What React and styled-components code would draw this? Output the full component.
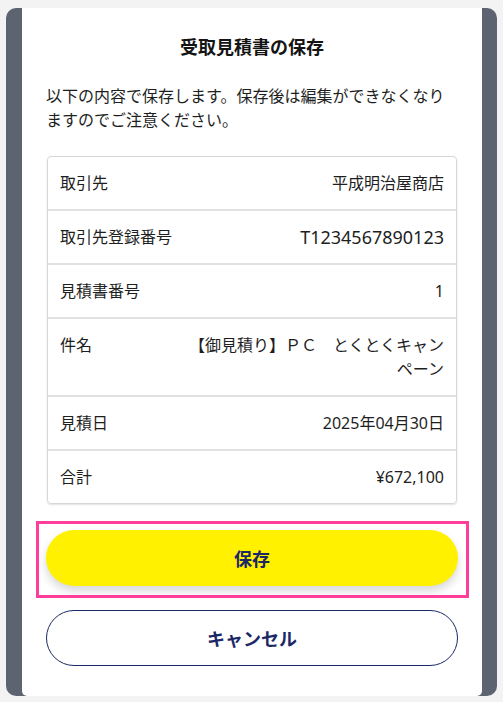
import React from 'react';
import styled, { createGlobalStyle } from 'styled-components';

const GlobalStyle = createGlobalStyle`
  html, body {
    margin: 0;
    padding: 0;
    background: #f3f3f3;
  }
  * {
    box-sizing: border-box;
  }
  body {
    font-family: "Noto Sans", "Noto Sans CJK JP", sans-serif;
    color: #1e1e1e;
  }
`;

const Frame = styled.div`
  width: 503px;
  height: 702px;
  padding: 8px 6px 6px 6px;
  display: flex;
`;

const Overlay = styled.div`
  flex: 1;
  display: flex;
  background: #5d6371;
  border-radius: 10px;
  padding: 0 15px 0 16px;
`;

const Modal = styled.div`
  flex: 1;
  display: flex;
  flex-direction: column;
  background: #ffffff;
  border-radius: 0 0 5px 5px;
  padding: 26px 24px 30px;
`;

const Title = styled.h2`
  margin: 0;
  font-size: 18px;
  line-height: 27px;
  font-weight: 700;
  text-align: center;
  color: #141414;
`;

const Lead = styled.p`
  margin: 23px 0 0;
  font-size: 16px;
  line-height: 24px;
  color: #1e1e1e;
`;

const Table = styled.div`
  margin: 24px 1px 0;
  border: 1px solid #d6d6d6;
  border-radius: 4px;
  box-shadow: 0 1px 2px rgba(0, 0, 0, 0.12);
`;

const Row = styled.div`
  display: grid;
  grid-template-columns: 120px 1fr;
  padding: 14px 12px;
  font-size: 16px;
  line-height: 24px;
  & + & {
    border-top: 2px solid #e1e1e1;
  }
`;

const Label = styled.span`
  color: #1e1e1e;
`;

const Value = styled.span`
  text-align: right;
  color: #1e1e1e;
  font-size: ${(props) => props.size || 16}px;
`;

const Actions = styled.div`
  display: flex;
  flex-direction: column;
  gap: 24px;
  margin-top: 26px;
`;

const Button = styled.button`
  position: relative;
  height: 56px;
  width: 100%;
  border-radius: 28px;
  font-family: "Noto Sans", "Noto Sans CJK JP", sans-serif;
  font-size: 18px;
  font-weight: 700;
  color: #1c2766;
  cursor: pointer;
  background: ${(props) => (props.primary ? '#fff100' : '#ffffff')};
  border: ${(props) => (props.primary ? 'none' : '1px solid #1c2766')};
  box-shadow: ${(props) => (props.primary ? '0 5px 10px rgba(0, 0, 0, 0.16)' : 'none')};
`;

const FocusMark = styled.span`
  position: absolute;
  top: -9px;
  left: -10px;
  right: -11px;
  bottom: -12px;
  border: 3px solid #ff3d9a;
  pointer-events: none;
`;

const rows = [
  { label: '取引先', value: '平成明治屋商店' },
  { label: '取引先登録番号', value: 'T1234567890123', size: 18 },
  { label: '見積書番号', value: '1' },
  { label: '件名', value: '【御見積り】ＰＣ　とくとくキャンペーン' },
  { label: '見積日', value: '2025年04月30日' },
  { label: '合計', value: '¥672,100' },
];

const App = () => {
  return (
    <>
      <GlobalStyle />
      <Frame>
        <Overlay>
          <Modal>
            <Title>受取見積書の保存</Title>
            <Lead>以下の内容で保存します。保存後は編集ができなくなりますのでご注意ください。</Lead>
            <Table>
              {rows.map((row) => (
                <Row key={row.label}>
                  <Label>{row.label}</Label>
                  <Value size={row.size}>{row.value}</Value>
                </Row>
              ))}
            </Table>
            <Actions>
              <Button primary>
                保存
                <FocusMark />
              </Button>
              <Button>キャンセル</Button>
            </Actions>
          </Modal>
        </Overlay>
      </Frame>
    </>
  );
};

export default App;
